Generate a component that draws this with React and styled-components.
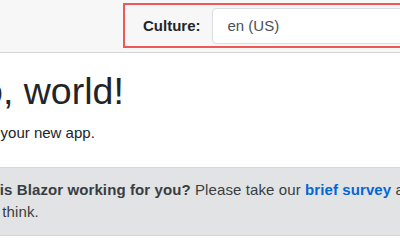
import React from "react";
import styled, { createGlobalStyle } from "styled-components";

const GlobalStyle = createGlobalStyle`
  html, body {
    margin: 0;
    padding: 0;
    background: #fff;
    overflow: hidden;
  }
  *, *::before, *::after {
    box-sizing: border-box;
  }
  body {
    font-family: "Liberation Sans", Arial, Helvetica, sans-serif;
    font-size: 15px;
    line-height: 1.5;
    color: #212529;
  }
`;

export default function App() {
  return (
    <>
      <GlobalStyle />
      <Viewport>
        <Main>
          <TopRow>
            <CultureForm>
              <CultureLabel htmlFor="culture">Culture:</CultureLabel>
              <CultureSelect id="culture" defaultValue="en-US">
                <option value="en-US">en (US)</option>
                <option value="fr-FR">fr (FR)</option>
                <option value="de-DE">de (DE)</option>
              </CultureSelect>
            </CultureForm>
          </TopRow>

          <Content>
            <Title>Hello, world!</Title>
            <Lead>Welcome to your new app.</Lead>

            <SurveyAlert role="alert">
              <PencilIcon aria-hidden="true" viewBox="0 0 16 16">
                <path
                  d="M11.5 1.5l3 3L5 14H2v-3z M10 3l3 3"
                  fill="none"
                  stroke="currentColor"
                  strokeWidth="1.6"
                />
              </PencilIcon>{" "}
              <strong>How is Blazor working for you?</strong>{" "}
              <NoWrap>
                Please take our <SurveyLink href="#">brief survey</SurveyLink>
              </NoWrap>{" "}
              and tell us what you think.
            </SurveyAlert>
          </Content>
        </Main>
      </Viewport>
    </>
  );
}

const Viewport = styled.div`
  width: 400px;
  height: 250px;
  overflow: hidden;
  background: #fff;
`;

const Main = styled.main`
  width: 630px;
  margin-left: -105px;
  display: flex;
  flex-direction: column;
`;

const TopRow = styled.div`
  display: flex;
  align-items: center;
  justify-content: flex-end;
  height: 52.5px;
  padding: 0 23.5px 0 22.5px;
  background: #f7f7f7;
  border-bottom: 1px solid #d6d5d5;
`;

const CultureForm = styled.div`
  display: flex;
  align-items: center;
  gap: 11px;
  height: 45px;
  padding: 0 18px;
  border: 2px solid #f25757;
`;

const CultureLabel = styled.label`
  font-weight: 700;
  font-size: 15px;
  color: #212529;
`;

const CultureSelect = styled.select`
  appearance: none;
  width: 270px;
  height: 35.5px;
  padding: 5px 12px 5px 15px;
  font-family: "Liberation Sans", Arial, sans-serif;
  font-size: 15px;
  color: #495057;
  background: #fff;
  border: 1px solid #d9dde2;
  border-radius: 4px;
  outline: none;
`;

const Content = styled.div`
  padding: 16.5px 22.5px 0;
`;

const Title = styled.h1`
  margin: 0 0 7.5px;
  font-size: 37.5px;
  font-weight: 400;
  line-height: 1.2;
  color: #212529;
`;

const Lead = styled.p`
  margin: 0 0 15px;
`;

const SurveyAlert = styled.div`
  margin-top: 22.5px;
  padding: 11.25px 18.75px;
  background: #e2e3e5;
  border: 1px solid #d6d8db;
  border-radius: 4px;
  color: #383d41;
  line-height: 22.5px;
  letter-spacing: 0.1px;
`;

const PencilIcon = styled.svg`
  display: inline-block;
  width: 16px;
  height: 16px;
  margin-right: 6px;
  vertical-align: -2px;
`;

const NoWrap = styled.span`
  white-space: nowrap;
`;

const SurveyLink = styled.a`
  color: #0366d6;
  font-weight: 700;
  text-decoration: none;
`;
